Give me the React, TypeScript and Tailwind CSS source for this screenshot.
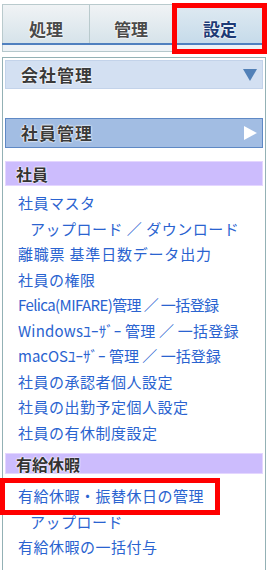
const halo = "[text-shadow:0_0_2px_#fff,0_0_2px_#fff,0_0_1px_#fff]";

const tabs = [
  { label: "処理", w: "w-[87px]", active: false },
  { label: "管理", w: "w-[83px]", active: false },
  { label: "設定", w: "w-[95px]", active: true },
];

type LinkItem = { label: string; indent: boolean; track: string };

const staffLinks: LinkItem[] = [
  { label: "社員マスタ", indent: false, track: "tracking-[0.5px]" },
  { label: "アップロード ／ ダウンロード", indent: true, track: "tracking-[0.5px]" },
  { label: "離職票 基準日数データ出力", indent: false, track: "tracking-[0.8px]" },
  { label: "社員の権限", indent: false, track: "tracking-[0.5px]" },
  { label: "Felica(MIFARE)管理 ／ 一括登録", indent: false, track: "tracking-[-0.6px]" },
  { label: "Windowsﾕｰｻﾞｰ 管理 ／ 一括登録", indent: false, track: "tracking-[0.2px]" },
  { label: "macOSﾕｰｻﾞｰ 管理 ／ 一括登録", indent: false, track: "tracking-[0px]" },
  { label: "社員の承認者個人設定", indent: false, track: "tracking-[0.5px]" },
  { label: "社員の出勤予定個人設定", indent: false, track: "tracking-[0.5px]" },
  { label: "社員の有休制度設定", indent: false, track: "tracking-[0.5px]" },
];

const leaveLinks: LinkItem[] = [
  { label: "有給休暇・振替休日の管理", indent: false, track: "tracking-[0.5px]" },
  { label: "アップロード", indent: true, track: "tracking-[0.5px]" },
  { label: "有給休暇の一括付与", indent: false, track: "tracking-[0.5px]" },
];

const LinkList = ({ items }: { items: LinkItem[] }) => (
  <ul className="flex flex-col">
    {items.map(({ label, indent, track }, index) => (
      <li
        key={index + 1}
        className={`h-[25.5px] leading-[25.5px] text-[15px] text-[#2a63d0] whitespace-nowrap ${track} ${
          indent ? "pl-[27px]" : "pl-[15px]"
        }`}
      >
        {label}
      </li>
    ))}
  </ul>
);

const SectionHeader = ({ label, className }: { label: string; className: string }) => (
  <div
    className={`mx-[2px] flex items-center pl-[10px] bg-[#ccbcfd] border border-[#e4d6ff] text-[16px] font-bold text-[#333] ${halo} ${className}`}
  >
    {label}
  </div>
);

export default function App() {
  return (
    <div className="relative w-[267px] h-[570px] overflow-hidden bg-white font-['Noto_Sans_CJK_JP','Noto_Sans',sans-serif]">
      {/* tabs */}
      <div className="pt-[4px] pl-[2px]">
        <div className="flex h-[39px]">
          {tabs.map(({ label, w, active }) => (
            <div
              key={label}
              className={`${w} flex items-center justify-center pt-[9px] border-t border-l border-[#b9cacd] text-[17px] font-bold ${halo} ${
                active
                  ? "bg-gradient-to-b from-[#dfeaf2] to-[#c6dbea] text-[#1d3b76] shadow-[inset_4px_0_0_#f4f8fb]"
                  : "bg-gradient-to-b from-[#f0f3f5] to-[#d6e3ea] text-[#4a4a4a]"
              }`}
            >
              {label}
            </div>
          ))}
        </div>
        <div className="h-[2px] bg-[#4f80bf]" />
        <div className="h-[7px] bg-[#edf2f6] border-x border-b border-[#b5c8cc]" />
      </div>

      {/* side panel */}
      <div className="mt-[5px] ml-[2px] w-[264px] h-[520px] border-t border-x border-[#93b1b5]">
        <div className="mx-[2px] mt-[2px] h-[29px] flex items-center justify-between pl-[15px] pr-[5px] bg-[#d3e0f2] border border-[#c3d3ea] text-[17px] font-bold text-[#3a3a3a]">
          <span className={`tracking-[1px] ${halo}`}>会社管理</span>
          <svg width="14" height="12" viewBox="0 0 14 12">
            <path d="M0 0H14L7 12Z" fill="#5281b8" />
          </svg>
        </div>

        <div className="mx-[2px] mt-[29px] h-[30px] flex items-center justify-between pl-[15px] pr-[5px] bg-[#a2bde3] border border-[#5f89c5] text-[17px] font-bold text-[#3a3a3a]">
          <span className={`tracking-[1px] ${halo}`}>社員管理</span>
          <svg width="13" height="14" viewBox="0 0 13 14">
            <path d="M0 0L13 7L0 14Z" fill="#ffffff" />
          </svg>
        </div>

        <SectionHeader label="社員" className="mt-[13px] h-[25px]" />
        <div className="mt-[4px]">
          <LinkList items={staffLinks} />
        </div>

        <SectionHeader label="有給休暇" className="mt-[8px] h-[21px]" />
        <div className="mt-[9px]">
          <LinkList items={leaveLinks} />
        </div>
      </div>

      {/* highlight boxes */}
      <div className="absolute left-[172px] top-[3px] w-[95px] h-[51px] border-[5px] border-[#ff0000]" />
      <div className="absolute left-0 top-[478px] w-[220px] h-[37px] border-[5px] border-[#ff0000]" />
    </div>
  );
}
